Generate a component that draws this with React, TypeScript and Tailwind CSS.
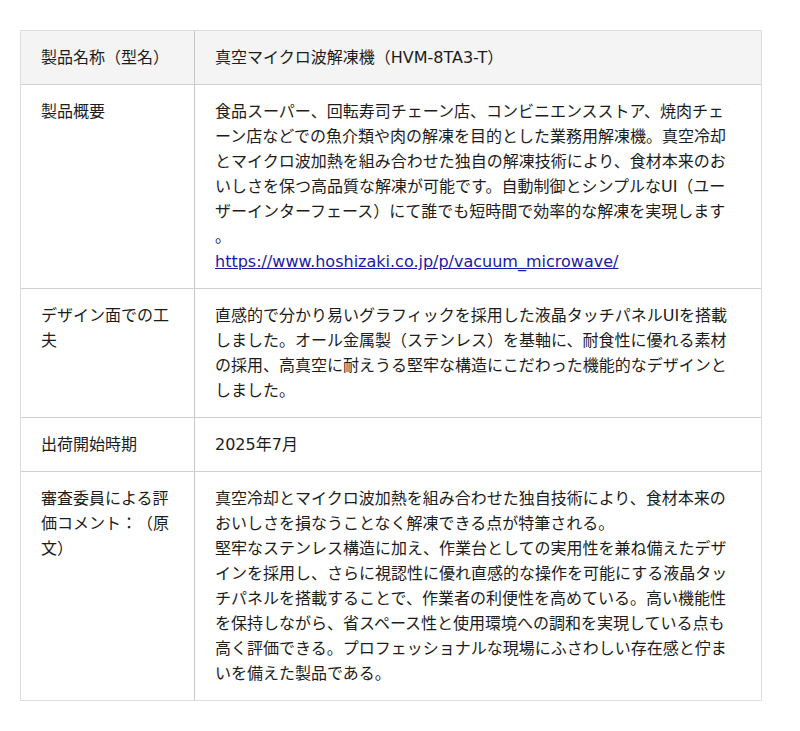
import React from "react";

type Row = { label: string; lines: string[]; link?: string; head?: boolean };

const rows: Row[] = [
  { label: "製品名称（型名）", lines: ["真空マイクロ波解凍機（HVM-8TA3-T）"], head: true },
  {
    label: "製品概要",
    lines: [
      "食品スーパー、回転寿司チェーン店、コンビニエンスストア、焼肉チェ",
      "ーン店などでの魚介類や肉の解凍を目的とした業務用解凍機。真空冷却",
      "とマイクロ波加熱を組み合わせた独自の解凍技術により、食材本来のお",
      "いしさを保つ高品質な解凍が可能です。自動制御とシンプルなUI（ユー",
      "ザーインターフェース）にて誰でも短時間で効率的な解凍を実現します",
      "。",
    ],
    link: "https://www.hoshizaki.co.jp/p/vacuum_microwave/",
  },
  {
    label: "デザイン面での工夫",
    lines: [
      "直感的で分かり易いグラフィックを採用した液晶タッチパネルUIを搭載",
      "しました。オール金属製（ステンレス）を基軸に、耐食性に優れる素材",
      "の採用、高真空に耐えうる堅牢な構造にこだわった機能的なデザインと",
      "しました。",
    ],
  },
  { label: "出荷開始時期", lines: ["2025年7月"] },
  {
    label: "審査委員による評価コメント：（原文）",
    lines: [
      "真空冷却とマイクロ波加熱を組み合わせた独自技術により、食材本来の",
      "おいしさを損なうことなく解凍できる点が特筆される。",
      "堅牢なステンレス構造に加え、作業台としての実用性を兼ね備えたデザ",
      "インを採用し、さらに視認性に優れ直感的な操作を可能にする液晶タッ",
      "チパネルを搭載することで、作業者の利便性を高めている。高い機能性",
      "を保持しながら、省スペース性と使用環境への調和を実現している点も",
      "高く評価できる。プロフェッショナルな現場にふさわしい存在感と佇ま",
      "いを備えた製品である。",
    ],
  },
];

export default function App() {
  return (
    <div
      className="min-h-[731px] bg-white pt-[30px] pl-5 text-[16px] leading-[25px] text-[#1c1c1c] [text-spacing-trim:space-all]"
      style={{ fontFamily: '"DejaVu Sans", "Noto Sans CJK JP", sans-serif' }}
    >
      <div className="w-[742px] border border-[#ddd]">
        {rows.map((r, i) => (
          <div
            key={i}
            className={
              "grid grid-cols-[174px_1fr] " +
              (i > 0 ? "border-t border-[#cfcfcf] " : "") +
              (r.head ? "bg-[#f4f4f4]" : "bg-white")
            }
          >
            <div className="border-r border-[#c8c8c8] px-5 pt-[14px] pb-[14px] [line-break:anywhere]">
              {r.label}
            </div>
            <div className="px-5 pt-[14px] pb-[14px]">
              {r.lines.map((l, j) => (
                <span key={j} className="block whitespace-nowrap">
                  {l}
                </span>
              ))}
              {r.link && (
                <a href="#" className="block text-[#1a1aa6] underline">
                  {r.link}
                </a>
              )}
            </div>
          </div>
        ))}
      </div>
    </div>
  );
}
